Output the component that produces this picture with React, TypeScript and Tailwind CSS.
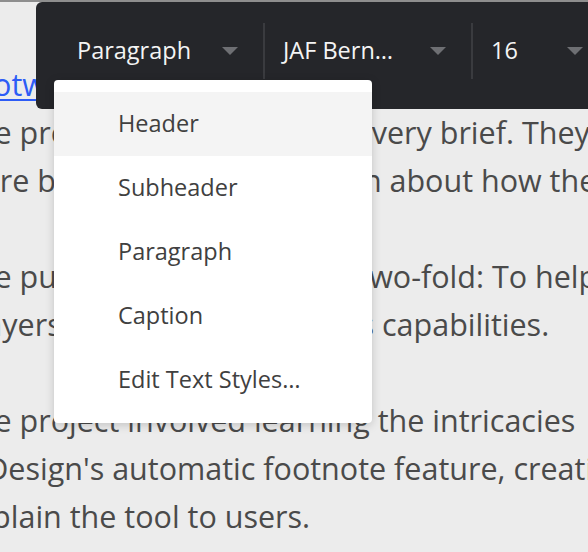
import React from "react";

function Caret() {
  return (
    <svg width="16" height="8" viewBox="0 0 16 8" className="shrink-0">
      <path d="M0 0 L16 0 L8 8 Z" fill="#6e6f73" />
    </svg>
  );
}

export default function App() {
  const items = ["Header", "Subheader", "Paragraph", "Caption", "Edit Text Styles…"];
  return (
    <div className="relative h-[552px] w-[588px] overflow-hidden bg-[#ececec] font-['Open_Sans',sans-serif]">
      <div className="h-[2px] bg-[#8e8e8e]" />
      <div className="ml-[-41px] whitespace-nowrap pt-[58px] text-[30.5px] leading-[48px] text-[#4a4a4a]">
        <div>
          <a className="text-[#2d5cf6] underline decoration-[2px] underline-offset-[3px]">Footwork</a> Studio case study
        </div>
        <div>The previous iterations were very brief. They were</div>
        <div>were bare of vital information about how the tool works.</div>
        <div>&nbsp;</div>
        <div>The purpose of the site was two-fold: To help designers</div>
        <div>players understand the tool&apos;s capabilities.</div>
        <div>&nbsp;</div>
        <div>The project involved learning the intricacies</div>
        <div>InDesign&apos;s automatic footnote feature, creating</div>
        <div>explain the tool to users.</div>
      </div>

      {/* toolbar */}
      <div className="absolute left-[36px] top-[2px] h-[107px] w-[620px] rounded-l-[6px] bg-[#25262a] pt-[21px] text-[23.5px] text-[#f4f4f4]">
        <div className="flex h-[56px] items-stretch">
          <div className="flex w-[227px] items-center justify-between pl-[41px] pr-[25px]">
            <span>Paragraph</span>
            <Caret />
          </div>
          <div className="w-[2px] bg-[#3a3b3f]" />
          <div className="flex w-[206px] items-center justify-between pl-[18px] pr-[25px]">
            <span>JAF Bern…</span>
            <Caret />
          </div>
          <div className="w-[2px] bg-[#3a3b3f]" />
          <div className="flex w-[135px] items-center justify-between pl-[18px] pr-[25px]">
            <span>16</span>
            <Caret />
          </div>
        </div>
      </div>

      {/* dropdown menu */}
      <div className="absolute left-[54px] top-[80px] w-[318px] rounded-[4px] bg-white pt-[12px] pb-[11px] text-[23.5px] text-[#404040] shadow-[0_2px_10px_rgba(0,0,0,0.18)]">
        {items.map((it, i) => (
          <div
            key={it}
            className={
              i === 0
                ? "flex h-[64px] items-center bg-[#f4f4f4] pl-[64px]"
                : "flex h-[64px] items-center pl-[64px]"
            }
          >
            {it}
          </div>
        ))}
      </div>
    </div>
  );
}
